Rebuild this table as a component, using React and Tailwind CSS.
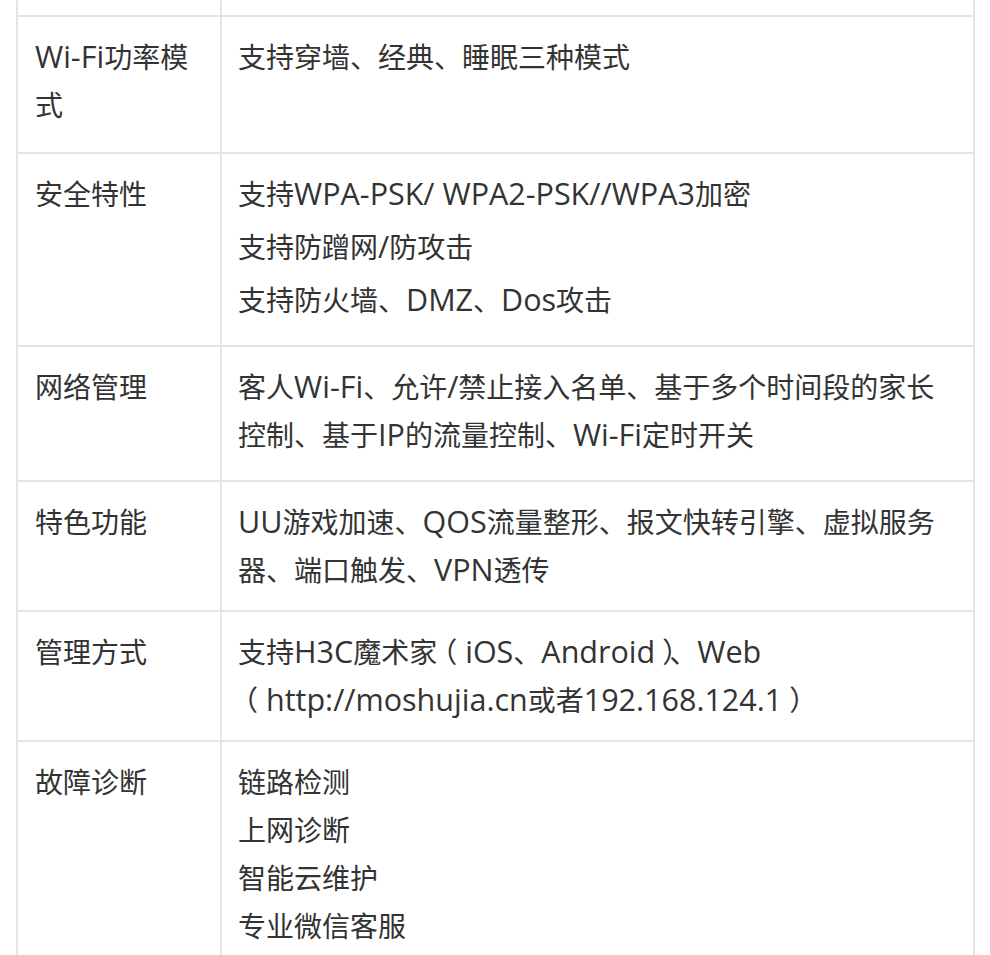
import React from "react";

const font = { fontFamily: "'Open Sans', 'Noto Sans CJK SC', sans-serif" };

function L({ children }) {
  return <span className="text-[30.5px] leading-none">{children}</span>;
}

function LP() {
  return <span className="relative left-[-8px]">（</span>;
}
function RP() {
  return <span className="relative left-[7px]">）</span>;
}

function Row({ label, children, pb = "pb-4" }) {
  return (
    <div className="flex border-b-2 border-[#e4e4e4]">
      <div className={"w-[204px] shrink-0 border-r-2 border-[#e4e4e4] pl-[17px] pr-4 pt-4 " + pb}>
        {label}
      </div>
      <div className={"flex-1 pl-4 pr-4 pt-4 " + pb}>{children}</div>
    </div>
  );
}

export default function App() {
  return (
    <div className="min-h-[955px] w-[990px] bg-white overflow-hidden" style={font}>
      <div className="ml-[16px] w-[959px] border-x-2 border-[#e4e4e4] text-[28px] leading-[48px] text-[#333333]">
        <div className="flex h-[17px] border-b-2 border-[#e4e4e4]">
          <div className="w-[204px] shrink-0 border-r-2 border-[#e4e4e4]" />
          <div className="flex-1" />
        </div>

        <Row pb="pb-[23px]" label={<><L>Wi-Fi</L>功率模<br />式</>}>
          支持穿墙、经典、睡眠三种模式
        </Row>

        <Row label="安全特性">
          <p className="mb-[5px]">支持<L>WPA-PSK/ WPA2-PSK//WPA3</L>加密</p>
          <p className="mb-[5px]">支持防蹭网<L>/</L>防攻击</p>
          <p className="mb-[5px]">支持防火墙、<L>DMZ</L>、<L>Dos</L>攻击</p>
        </Row>

        <Row pb="pb-[21px]" label="网络管理">
          客人<L>Wi-Fi</L>、允许<L>/</L>禁止接入名单、基于多个时间段的家长<br />
          控制、基于<L>IP</L>的流量控制、<L>Wi-Fi</L>定时开关
        </Row>

        <Row label="特色功能">
          <L>UU</L>游戏加速、<L>QOS</L>流量整形、报文快转引擎、虚拟服务<br />
          器、端口触发、<L>VPN</L>透传
        </Row>

        <Row label="管理方式">
          支持<L>H3C</L>魔术家<LP /><L>iOS</L>、<L>Android</L><RP />、<L>Web</L><br />
          <LP /><L>http://moshujia.cn</L>或者<L>192.168.124.1</L><RP />
        </Row>

        <Row pb="pb-16" label="故障诊断">
          链路检测<br />
          上网诊断<br />
          智能云维护<br />
          专业微信客服
        </Row>
      </div>
    </div>
  );
}
